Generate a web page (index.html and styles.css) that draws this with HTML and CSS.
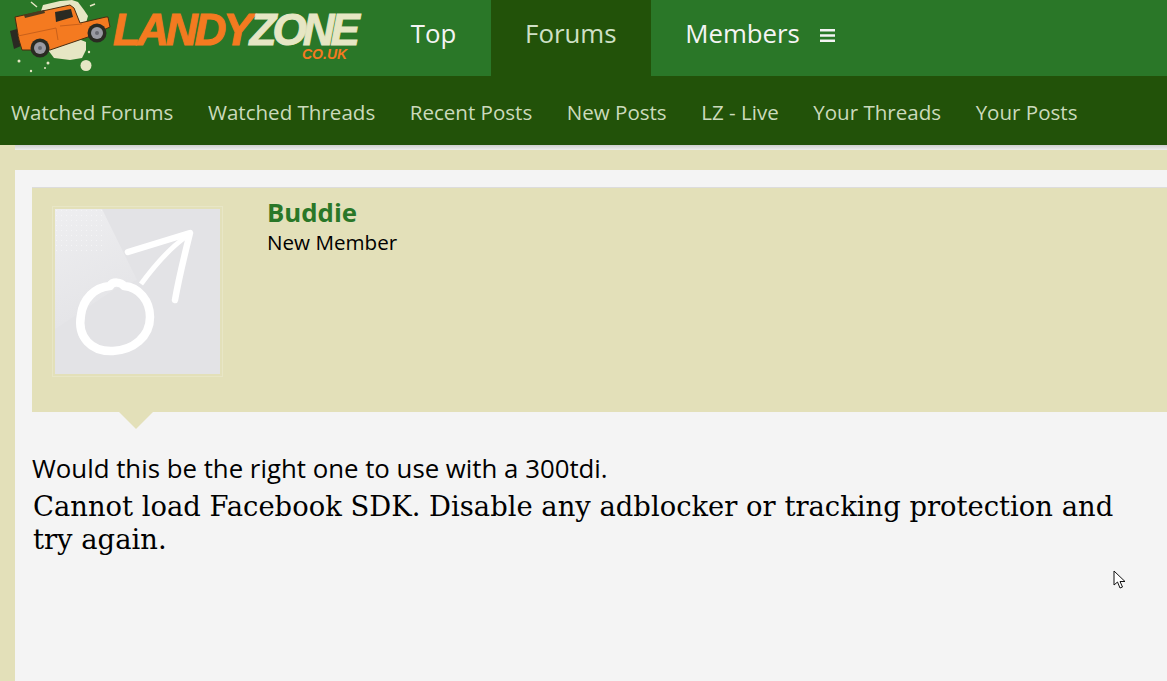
FILE: index.html
```html
<!DOCTYPE html>
<html lang="en">
<head>
<meta charset="utf-8">
<title>LandyZone</title>
<link rel="stylesheet" href="styles.css">
</head>
<body>
<header class="topbar">
  <a class="logo" href="#">
    <svg class="logo-art" width="114" height="76" viewBox="0 0 114 76" aria-hidden="true">
      <path d="M43 5 L60 1 L72 0 L78 2 L84 10 L88 16 L84 30 L76 38 L86 42 L86 50 L82 58 L70 60 L54 58 L48 50 L40 40 L40 14Z" fill="#e6e6c4"/>
      <circle cx="86" cy="65.500" r="5.500" fill="#e6e6c4"/>
      <circle cx="19" cy="61" r="1.500" fill="#e6e6c4"/><circle cx="31" cy="71" r="1.200" fill="#e6e6c4"/><circle cx="48" cy="63" r="1.500" fill="#e6e6c4"/><circle cx="45" cy="68" r="1" fill="#e6e6c4"/><circle cx="89" cy="52" r="1.200" fill="#e6e6c4"/>
      <path d="M31 2 L37 7 M90 6 L95 4" stroke="#e6e6c4" stroke-width="1.500"/>
      <path d="M10 31 L17 29 L21 46 L14 49Z" fill="#2a2a22"/>
      <path d="M15 17 L70 5 L74 8 L80 23 L106 17 L108 17 L110 27 L88 37 L50 50 L22 50 L19 40Z" fill="#f47a20" stroke="#4a2d10" stroke-width="1"/>
      <path d="M55 12 L71 9 L73 17 L56 22Z" fill="#2a2a22"/>
      <path d="M24 15 L44 10 L45 13 L25 18Z" fill="#4a3a20"/>
      <path d="M18 36 L56 28 L58 40 M60 26 L82 24" fill="none" stroke="#c9601a" stroke-width="1"/>
      <circle cx="40" cy="48" r="9.500" fill="#2a2a22"/><circle cx="40" cy="48" r="6" fill="#9a9aa2"/><circle cx="40" cy="48" r="2" fill="#6a6a72"/>
      <circle cx="97" cy="33" r="9.500" fill="#2a2a22"/><circle cx="97" cy="33" r="6" fill="#9a9aa2"/><circle cx="97" cy="33" r="2" fill="#6a6a72"/>
    </svg>
    <span class="logo-word"><span class="landy">LANDY</span><span class="zone">ZONE</span></span>
    <span class="logo-tld">CO.UK</span>
  </a>
  <nav class="main-nav">
    <a class="main-tab" href="#">Top</a>
    <a class="main-tab is-active" href="#">Forums</a>
    <a class="main-tab" href="#">Members
      <svg class="burger" width="15" height="13" viewBox="0 0 15 13" aria-hidden="true"><path d="M0 1.250h15M0 6.500h15M0 11.750h15" stroke="#f4f4f4" stroke-width="2.500"/></svg>
    </a>
  </nav>
</header>
<nav class="sub-nav">
  <a href="#">Watched Forums</a>
  <a href="#">Watched Threads</a>
  <a href="#">Recent Posts</a>
  <a href="#">New Posts</a>
  <a href="#">LZ - Live</a>
  <a href="#">Your Threads</a>
  <a href="#">Your Posts</a>
</nav>
<div class="sub-shadow"></div>
<main class="content">
  <article class="post">
    <section class="user-block">
      <div class="avatar">
        <svg width="165" height="165" viewBox="0 0 165 165" aria-hidden="true">
          <defs>
            <linearGradient id="sheen" x1="0" y1="0" x2="0.3" y2="1">
              <stop offset="0" stop-color="#eeeef0"/>
              <stop offset="1" stop-color="#e4e4e7"/>
            </linearGradient>
            <pattern id="dots" width="5" height="5" patternUnits="userSpaceOnUse">
              <rect x="1" y="1" width="1" height="1" fill="#f4f4f6"/>
            </pattern>
          </defs>
          <rect width="165" height="165" fill="#e3e3e6"/>
          <path d="M0 0H47L82 71L60 80L0 120Z" fill="url(#sheen)"/>
          <rect width="50" height="45" fill="url(#dots)"/>
          <path d="M26 106 C28 90 40 78 55 77 C58 72 66 73 69 77 C84 78 95 92 95 108 C95 128 78 141 58 142 C36 143 22 128 26 106Z" fill="none" stroke="#fff" stroke-width="8.500" stroke-linejoin="round"/>
          <path d="M86 75 C100 56 116 38 132 27" fill="none" stroke="#fff" stroke-width="5"/>
          <path d="M73 43 L135 24 C130 44 124 68 120 91" fill="none" stroke="#fff" stroke-width="6.500" stroke-linecap="round" stroke-linejoin="round"/>
        </svg>
      </div>
      <div class="user-info">
        <a class="user-name" href="#">Buddie</a>
        <div class="user-title">New Member</div>
      </div>
      <span class="arrow"></span>
    </section>
    <div class="message">
      <p class="message-text">Would this be the right one to use with a 300tdi.</p>
      <p class="embed-error">Cannot load Facebook SDK. Disable any adblocker or tracking protection and try again.</p>
    </div>
  </article>
</main>
<svg class="cursor" width="14" height="20" viewBox="0 0 14 20" aria-hidden="true"><path d="M1 1V15L4.500 12L7 18L9.500 17L7 11.500H12Z" fill="#fff" stroke="#111" stroke-width="1"/></svg>
</body>
</html>
```
FILE: styles.css
```css
html, body { margin: 0; padding: 0; height: 100%; overflow: hidden; }
body { background: #e3e0b9; font-family: "Open Sans", sans-serif; color: #000; position: relative; }
a { text-decoration: none; color: inherit; }

.topbar { height: 76px; background: #2a7728; display: flex; }
.logo { position: relative; width: 376.400px; flex: none; display: block; }
.logo-art { position: absolute; left: 0; top: 0; }
.logo-word { position: absolute; left: 113px; top: 12px; font: italic 700 44px/36px "Liberation Sans", sans-serif; white-space: nowrap; -webkit-text-stroke: 1px currentColor; }
.landy { color: #f47a20; letter-spacing: -3px; }
.zone { color: #e6e6c4; letter-spacing: -4px; }
.logo-tld { position: absolute; left: 302px; top: 48px; font: italic 700 14px/13px "Liberation Sans", sans-serif; color: #f47a20; }

.main-nav { display: flex; }
.main-tab { display: flex; align-items: center; padding: 0 34.400px 11px; font-size: 25.800px; color: #f4f4f4; height: 65px; white-space: nowrap; }
.main-tab.is-active { background: #225209; color: #cfe0c6; padding-bottom: 11px; }
.burger { margin-left: 20px; margin-top: 5px; }

.sub-nav { height: 69px; box-sizing: border-box; padding: 2px 0 0 11px; background: #225209; display: flex; align-items: center; gap: 34.560px; font-size: 20.550px; color: #cbdabc; white-space: nowrap; }
.sub-shadow { height: 5px; margin-left: 15px; background: linear-gradient(#cfcfcf, #eeeeee); }

.content { margin: 20px 0 0 15px; background: #f4f4f4; padding: 17px 0 0 17px; height: 600px; }
.user-block { position: relative; height: 225px; box-sizing: border-box; background: #e3e0b9; border-top: 1px solid #dcdcdc; display: flex; padding: 21px 0 0 23px; }
.avatar { width: 165px; height: 165px; flex: none; outline: 1px solid #e8e6c6; outline-offset: 2px; }
.avatar svg { display: block; }
.user-info { margin-left: 47px; margin-top: -14px; }
.user-name { display: block; font-size: 25.800px; line-height: 35px; font-weight: 700; color: #2a7728; }
.user-title { font-size: 20.600px; line-height: 24px; }
.arrow { position: absolute; left: 87px; top: 224px; width: 0; height: 0; border-left: 17px solid transparent; border-right: 17px solid transparent; border-top: 17px solid #e3e0b9; }

.message { padding: 39px 20px 0 0; width: 1110px; box-sizing: border-box; }
.message-text { margin: 0; font-size: 25.800px; line-height: 35px; }
.embed-error { margin: 4px 0 0 1px; font-family: "DejaVu Serif", serif; font-size: 27.400px; line-height: 33px; }
.cursor { position: absolute; left: 1113px; top: 570px; }
```
